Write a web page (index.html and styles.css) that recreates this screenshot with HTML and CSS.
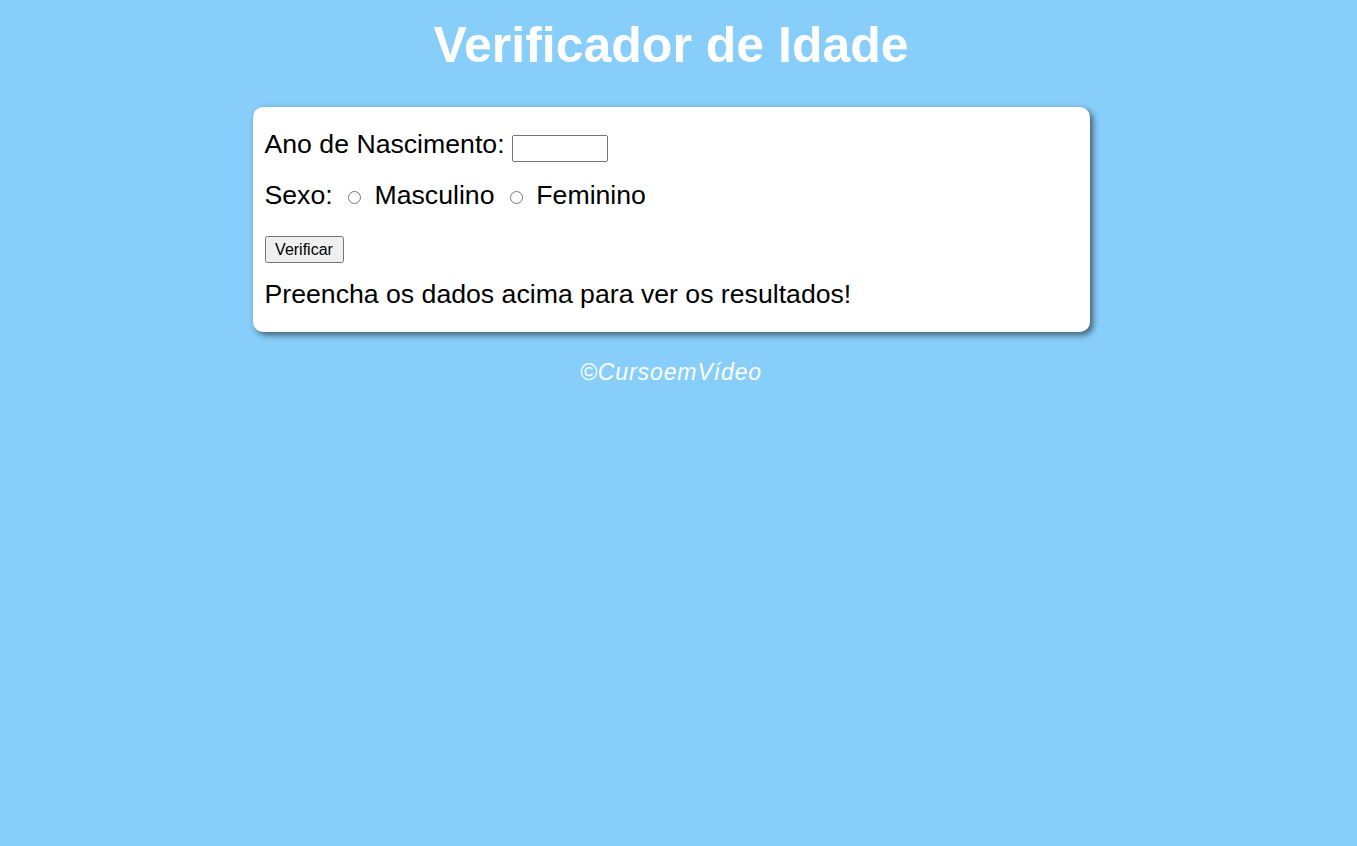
FILE: index.html
```html
<!DOCTYPE html>
<html lang="pt-br">
<head>
<meta charset="UTF-8">
<title>Verificador de Idade</title>
<link rel="stylesheet" href="styles.css">
</head>
<body>
<header class="header">
  <h1 class="title">Verificador de Idade</h1>
</header>
<section class="card">
  <div class="form">
    <p class="row first">Ano de Nascimento: <input type="number" class="year" id="txtano"></p>
    <p class="row">Sexo: <input type="radio" name="radsex" id="mas" class="radio"> <label for="mas">Masculino</label> <input type="radio" name="radsex" id="fem" class="radio"> <label for="fem">Feminino</label></p>
    <p class="row-btn"><input type="button" value="Verificar" class="btn"></p>
  </div>
  <div class="res">Preencha os dados acima para ver os resultados!</div>
</section>
<footer class="footer">
  <p class="copy">&copy;CursoemVídeo</p>
</footer>
</body>
</html>
```

FILE: styles.css
```css
html, body {
  background: #87cefa;
}
body {
  margin: 8px 23px 8px 8px;
  font-family: "Liberation Sans", Arial, sans-serif;
}
.header {
  color: white;
  text-align: center;
}
.title {
  font-size: 50px;
  margin: 8px 0 33px;
}
.card {
  background: white;
  border-radius: 10px;
  width: 813px;
  margin: 0 auto;
  padding: 1px 12px;
  box-shadow: 3px 3px 6px rgba(0, 0, 0, 0.55);
  font-size: 26.67px;
}
.row {
  margin: 18px 0;
}
.first {
  margin-top: 21px;
}
.year {
  width: 96px;
  height: 27px;
  box-sizing: border-box;
}
.radio {
  margin: 0 6px 1px 8px;
}
.row-btn {
  margin: 25px 0 0;
}
.btn {
  display: block;
  font-family: "Liberation Sans", Arial, sans-serif;
  font-size: 16px;
  width: 79px;
  height: 27px;
  padding: 0;
  box-sizing: border-box;
}
.res {
  margin: 16px 0 21px;
}
.footer {
  color: white;
  text-align: center;
  font-style: italic;
  font-size: 23px;
  letter-spacing: 0.9px;
}
.copy {
  margin: 27px 0 24px;
}
```
